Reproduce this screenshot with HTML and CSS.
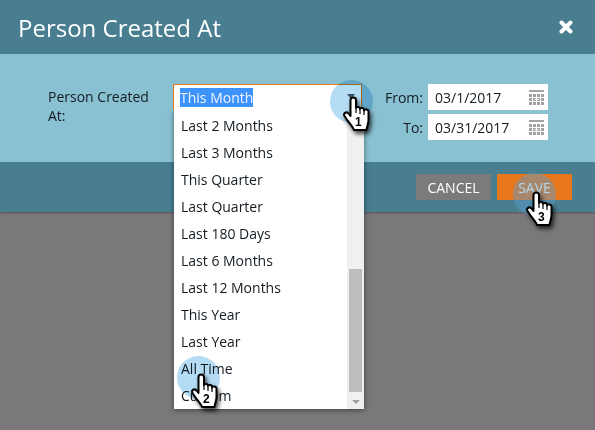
FILE: index.html
```html
<!DOCTYPE html>
<html lang="en">
  <head>
    <meta charset="UTF-8" />
    <title>Person Created At</title>
    <link rel="stylesheet" href="styles.css">
  </head>
  <body>
    <svg class="sprites" width="0" height="0">
      <symbol id="hand" viewBox="0 0 28 36">
        <path d="M7.500 4C7.500 .5 13 .5 13 4V12C13 10.500 17 10.500 17 12.500V13C17 11.500 21 11.500 21 13.500V14.500C21 13 25.500 13 25.500 15.500V24C25.500 28 24 30 23.500 34H11C9.500 30 5 26 1.500 20 0 17.500 3 15 5.500 17.500L7.500 20Z" fill="#fff" stroke="#000" stroke-width="2" stroke-linejoin="round"/>
        <path d="M13 12v5M17 13v5M21 14v5" stroke="#000" stroke-width="1.200" fill="none"/>
      </symbol>
      <symbol id="cal-grid" viewBox="0 0 15 15">
        <path d="M0 0h15v2H0z" fill="#a3a3a3"/>
        <path d="M0 4h3v3H0zM4 4h3v3H4zM8 4h3v3H8zM12 4h3v3h-3zM0 8h3v3H0zM12 8h3v3h-3zM4 8h3v3H4zM8 8h3v3H8zM0 12h3v3H0zM4 12h3v3H4zM8 12h3v3H8zM12 12h3v3h-3z" fill="#a3a3a3"/>
        <path d="M5.500 9.500h4M7.500 7.500v4" stroke="#fff" stroke-width="1"/>
      </symbol>
    </svg>

    <div class="dialog">
      <header class="dialog-head">
        <h1>Person Created At</h1>
        <svg class="close" width="14" height="14" viewBox="0 0 14 14">
          <path d="M2.500 2.500l9 9M11.500 2.500l-9 9" stroke="#fff" stroke-width="4" stroke-linecap="round"/>
        </svg>
      </header>

      <div class="dialog-body">
        <label class="field-label">Person Created At:</label>
        <div class="select-box">
          <span class="selected">This Month</span>
          <span class="arrow"></span>
        </div>
        <div class="dates">
          <div class="date-row">
            <label>From:</label>
            <div class="date-input">
              <span>03/1/2017</span>
              <svg class="cal" width="15" height="15"><use href="#cal-grid"/></svg>
            </div>
          </div>
          <div class="date-row">
            <label>To:</label>
            <div class="date-input">
              <span>03/31/2017</span>
              <svg class="cal" width="15" height="15"><use href="#cal-grid"/></svg>
            </div>
          </div>
        </div>
      </div>

      <footer class="dialog-foot">
        <button class="btn btn-cancel">CANCEL</button>
        <button class="btn btn-save"><span>SAVE</span></button>
      </footer>
    </div>

    <div class="dropdown">
      <ul class="options">
        <li>Last 2 Months</li>
        <li>Last 3 Months</li>
        <li>This Quarter</li>
        <li>Last Quarter</li>
        <li>Last 180 Days</li>
        <li>Last 6 Months</li>
        <li>Last 12 Months</li>
        <li>This Year</li>
        <li>Last Year</li>
        <li>All Time</li>
        <li>Custom</li>
      </ul>
      <div class="scrollbar">
        <div class="thumb"></div>
        <span class="scroll-down"></span>
      </div>
    </div>

    <!-- click markers -->
    <div class="spot spot-1"></div>
    <div class="spot spot-2"></div>
    <div class="spot spot-3"></div>
    <div class="pointer pointer-1"><svg width="28" height="36"><use href="#hand"/></svg><b>1</b></div>
    <div class="pointer pointer-2"><svg width="28" height="36"><use href="#hand"/></svg><b>2</b></div>
    <div class="pointer pointer-3"><svg width="28" height="36"><use href="#hand"/></svg><b>3</b></div>
  </body>
</html>
```

FILE: styles.css
```css
body {
  margin: 0;
  width: 595px;
  height: 430px;
  overflow: hidden;
  position: relative;
  background: #7b787b;
  font-family: "Open Sans", "Liberation Sans", sans-serif;
  font-size: 14px;
  color: #141c22;
}

.sprites {
  position: absolute;
}

.dialog {
  display: flex;
  flex-direction: column;
  box-shadow: 0 1px 2px rgba(0, 0, 0, 0.3);
}

.dialog-head {
  height: 54px;
  background: #487e90;
  display: flex;
  align-items: center;
  justify-content: space-between;
  padding: 0 22px 0 18px;
}

.dialog-head h1 {
  margin: 0;
  font-size: 24px;
  font-weight: 400;
  color: #fff;
}

.close {
  display: block;
}

.dialog-body {
  height: 108px;
  box-sizing: border-box;
  background: #89c0d2;
  display: flex;
  align-items: flex-start;
  padding: 30px 47px 0 48px;
}

.field-label {
  width: 125px;
  flex: none;
  box-sizing: border-box;
  padding: 3px 20px 0 0;
  line-height: 19px;
}

.select-box {
  width: 189px;
  height: 26px;
  flex: none;
  box-sizing: border-box;
  background: #fff;
  border: 1px solid #e8761a;
  border-bottom: none;
  padding: 3px 0 0 6px;
  position: relative;
}

.selected {
  display: inline-block;
  background: #3d92fb;
  color: #eef4fd;
  line-height: 19px;
}

.arrow {
  position: absolute;
  top: 9px;
  right: 6px;
  border: 4px solid transparent;
  border-top: 5px solid #4a5a66;
  border-bottom: none;
}

.dates {
  margin-left: auto;
  display: flex;
  flex-direction: column;
  gap: 4px;
}

.date-row {
  display: flex;
  align-items: center;
  justify-content: flex-end;
  gap: 5px;
}

.date-input {
  width: 120px;
  height: 26px;
  box-sizing: border-box;
  background: #fff;
  display: flex;
  align-items: center;
  justify-content: space-between;
  padding: 0 4px 0 7px;
}

.cal {
  display: block;
}

.dialog-foot {
  height: 50px;
  box-sizing: border-box;
  background: #487e90;
  display: flex;
  justify-content: flex-end;
  gap: 6px;
  padding: 12px 23px 0 0;
}

.btn {
  width: 75px;
  height: 26px;
  border: 0;
  padding: 0;
  font-family: inherit;
  font-size: 14px;
  color: #fff;
}

.btn-cancel {
  background: #7b7b7b;
}

.btn-save {
  background: #e8761a;
}

/* label stays bright over the click marker */
.btn-save span {
  position: relative;
  z-index: 2;
  color: #b5d6ea;
}

.dropdown {
  position: absolute;
  left: 174px;
  top: 110px;
  width: 190px;
  height: 299px;
  background: #fff;
  box-shadow: 0 1px 5px rgba(0, 0, 0, 0.5);
  clip-path: inset(0 -8px -8px -8px);
  display: flex;
}

.options {
  list-style: none;
  margin: 0;
  padding: 2px 0 0 7px;
  flex: 1;
}

.options li {
  height: 27px;
  line-height: 27px;
}

.scrollbar {
  width: 17px;
  background: #f0f0f0;
  position: relative;
}

.thumb {
  position: absolute;
  top: 159px;
  left: 2px;
  width: 13px;
  height: 123px;
  background: #bdbdbd;
}

.scroll-down {
  position: absolute;
  bottom: 5px;
  left: 5px;
  border: 4px solid transparent;
  border-top: 4px solid #a0a0a0;
  border-bottom: none;
}

.spot {
  position: absolute;
  width: 43px;
  height: 43px;
  border-radius: 50%;
  background: #b4dcf4;
  mix-blend-mode: multiply;
}

.spot-1 {
  left: 330px;
  top: 80px;
}

.spot-2 {
  left: 177px;
  top: 356px;
}

.spot-3 {
  left: 513px;
  top: 173px;
  background: rgba(90, 160, 210, 0.45);
  mix-blend-mode: normal;
}

.pointer {
  position: absolute;
  z-index: 3;
  filter: drop-shadow(2px 3px 2px rgba(0, 0, 0, 0.7));
}

.pointer svg {
  display: block;
}

.pointer b {
  position: absolute;
  left: 12px;
  top: 19px;
  font-family: "Liberation Sans", sans-serif;
  font-size: 12px;
  color: #000;
}

.pointer-1 {
  left: 343px;
  top: 96px;
}

.pointer-2 {
  left: 191px;
  top: 373px;
}

.pointer-3 {
  left: 526px;
  top: 191px;
}
```
